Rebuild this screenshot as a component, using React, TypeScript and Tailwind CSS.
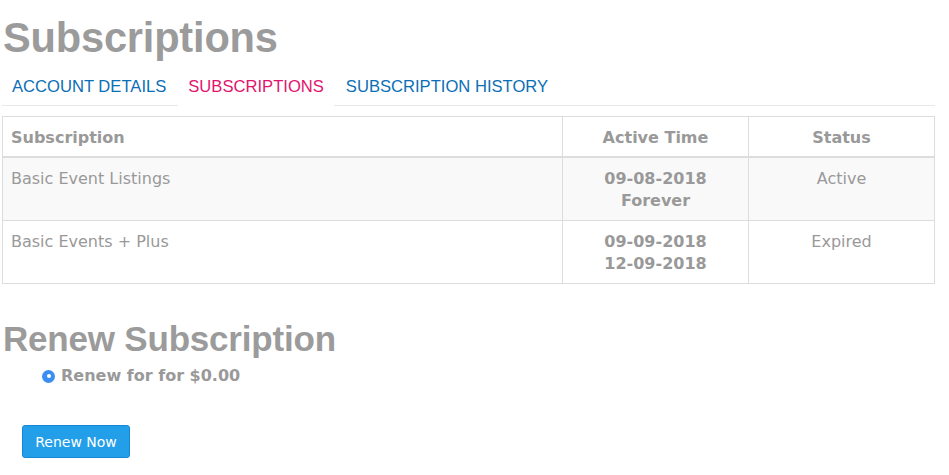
import React from "react";

const rows = [
  { name: "Basic Event Listings", start: "09-08-2018", end: "Forever", status: "Active", striped: true },
  { name: "Basic Events + Plus", start: "09-09-2018", end: "12-09-2018", status: "Expired", striped: false },
];

export default function App() {
  return (
    <div className="min-h-[475px] w-[949px] bg-white text-[#999]">
      <div className="w-[935px] pl-[2px]">
        <h1 className="mt-[15px] pl-[1px] text-[41.6px] leading-[45px] font-bold tracking-[-0.2px] text-[#9b9b9b] [font-family:'Liberation_Sans',Arial,sans-serif]">
          Subscriptions
        </h1>
        <ul className="mt-[6px] flex border-b border-[#e8e8e8] text-[16.6px] leading-[20px] [font-family:'Liberation_Sans',Arial,sans-serif]">
          <li className="mr-[2px] px-[10px] pt-[11px] pb-[8px] text-[#0b6fb6]">ACCOUNT DETAILS</li>
          <li className="-mb-px mr-[2px] border-b border-white px-[10px] pt-[11px] pb-[8px] text-[#e3126d]">SUBSCRIPTIONS</li>
          <li className="px-[10px] pt-[11px] pb-[8px] text-[#0b6fb6]">SUBSCRIPTION HISTORY</li>
        </ul>
        <table className="mt-[10px] w-[933px] border-collapse border border-[#ddd] text-[16px] leading-[22px] text-[#999] [font-family:'DejaVu_Sans',Verdana,sans-serif]">
          <thead>
            <tr>
              <th className="w-[560px] border border-b-2 border-[#ddd] px-[8px] pt-[10px] pb-[7px] text-left font-bold">Subscription</th>
              <th className="w-[186px] border border-b-2 border-[#ddd] px-[8px] pt-[10px] pb-[7px] text-center font-bold">Active Time</th>
              <th className="border border-b-2 border-[#ddd] px-[8px] pt-[10px] pb-[7px] text-center font-bold">Status</th>
            </tr>
          </thead>
          <tbody>
            {rows.map((r) => (
              <tr key={r.name} className={r.striped ? "bg-[#f9f9f9]" : "bg-white"}>
                <td className="border border-[#ddd] px-[8px] pt-[10px] pb-[8px] align-top">{r.name}</td>
                <td className="border border-[#ddd] px-[8px] pt-[10px] pb-[8px] text-center align-top font-bold">
                  {r.start}
                  <br />
                  {r.end}
                </td>
                <td className="border border-[#ddd] px-[8px] pt-[10px] pb-[8px] text-center align-top">{r.status}</td>
              </tr>
            ))}
          </tbody>
        </table>
        <h2 className="mt-[36px] pl-[1px] text-[35px] leading-[38px] font-bold tracking-[-0.2px] text-[#9b9b9b] [font-family:'Liberation_Sans',Arial,sans-serif]">
          Renew Subscription
        </h2>
        <label className="mt-[7px] ml-[40px] flex items-center gap-[6px] text-[16px] leading-[22px] font-bold text-[#999] [font-family:'DejaVu_Sans',Verdana,sans-serif]">
          <span className="flex h-[13px] w-[13px] items-center justify-center rounded-full bg-[#3c8ff2]">
            <span className="h-[4px] w-[4px] rounded-full bg-white" />
          </span>
          Renew for for $0.00
        </label>
        <button className="mt-[38px] ml-[20px] h-[33px] w-[108px] rounded-[3px] border border-[#1488d6] bg-[#239fe9] text-[14px] leading-[20px] text-white [font-family:'DejaVu_Sans',Verdana,sans-serif]">
          Renew Now
        </button>
      </div>
    </div>
  );
}
